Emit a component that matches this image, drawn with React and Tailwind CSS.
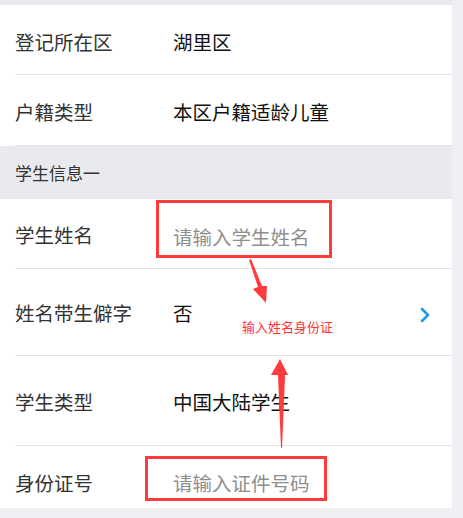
import React from "react";

const font = { fontFamily: '"Noto Sans CJK SC", "Noto Sans", sans-serif' };

function Row({ label, children, h, extra = "", last = false, right = null }) {
  return (
    <div className={`flex bg-white ${h}`}>
      <div
        className={`ml-[15px] flex flex-1 items-center ${extra} ${
          last ? "" : "border-b border-[#e3e3e6]"
        }`}
      >
        <div className="w-[158px] shrink-0 text-[19.5px] leading-[28px] text-[#333]">{label}</div>
        <div className="flex-1 text-[19.5px] leading-[28px] text-[#111]">{children}</div>
        {right}
      </div>
    </div>
  );
}

export default function App() {
  return (
    <div className="relative h-[518px] w-[463px] overflow-hidden bg-[#efeff4]" style={font}>
      <div className="h-[5px] w-[452px] bg-[#e9eaed]" />
      <div className="flex w-[452px] flex-col">
        <Row label="登记所在区" h="h-[70px]" extra="pt-[4px]">湖里区</Row>
        <Row label="户籍类型" h="h-[71px]" extra="pt-[3px]">本区户籍适龄儿童</Row>
        <div className="flex h-[53px] items-center bg-[#e9eaed] pl-[15px] text-[17px] text-[#333]">
          学生信息一
        </div>
        <Row label="学生姓名" h="h-[70px]" extra="pt-[2px]">
          <span className="relative top-[2px] text-[#8e8e8e]">请输入学生姓名</span>
        </Row>
        <Row
          label="姓名带生僻字"
          h="h-[87px]"
          extra="items-start pt-[30px]"
          right={
            <div className="mr-[22px] mt-[8px]">
              <svg width="10" height="16" viewBox="0 0 10 16">
                <path d="M2 2 L8 8 L2 14" fill="none" stroke="#1b9be6" strokeWidth="2.6" strokeLinecap="round" strokeLinejoin="round" />
              </svg>
            </div>
          }
        >
          否
        </Row>
        <Row label="学生类型" h="h-[90px]" extra="items-start pt-[32px]">中国大陆学生</Row>
        <Row label="身份证号" h="h-[62px]" extra="items-start pt-[23px]" last>
          <span className="text-[#8e8e8e]">请输入证件号码</span>
        </Row>
      </div>

      {/* annotations */}
      <div className="absolute left-[156px] top-[200px] h-[58px] w-[176px] border-[3px] border-[#ff3b3b]" />
      <div className="absolute left-[145px] top-[456px] h-[45px] w-[182px] border-[3px] border-[#ff3b3b]" />
      <div className="absolute left-[242px] top-[317px] text-[13px] leading-[20px] text-[#ff3333]">
        输入姓名身份证
      </div>
      <svg className="absolute left-0 top-0" width="463" height="518" viewBox="0 0 463 518">
        <polygon points="249,260 258,287 253,289 266,303 267,286 262,286 251,259" fill="#ff3b3b" />
        <polygon points="280,359 271,375 278,375 281,448 282,448 285,375 288,375" fill="#ff3b3b" />
      </svg>
    </div>
  );
}
